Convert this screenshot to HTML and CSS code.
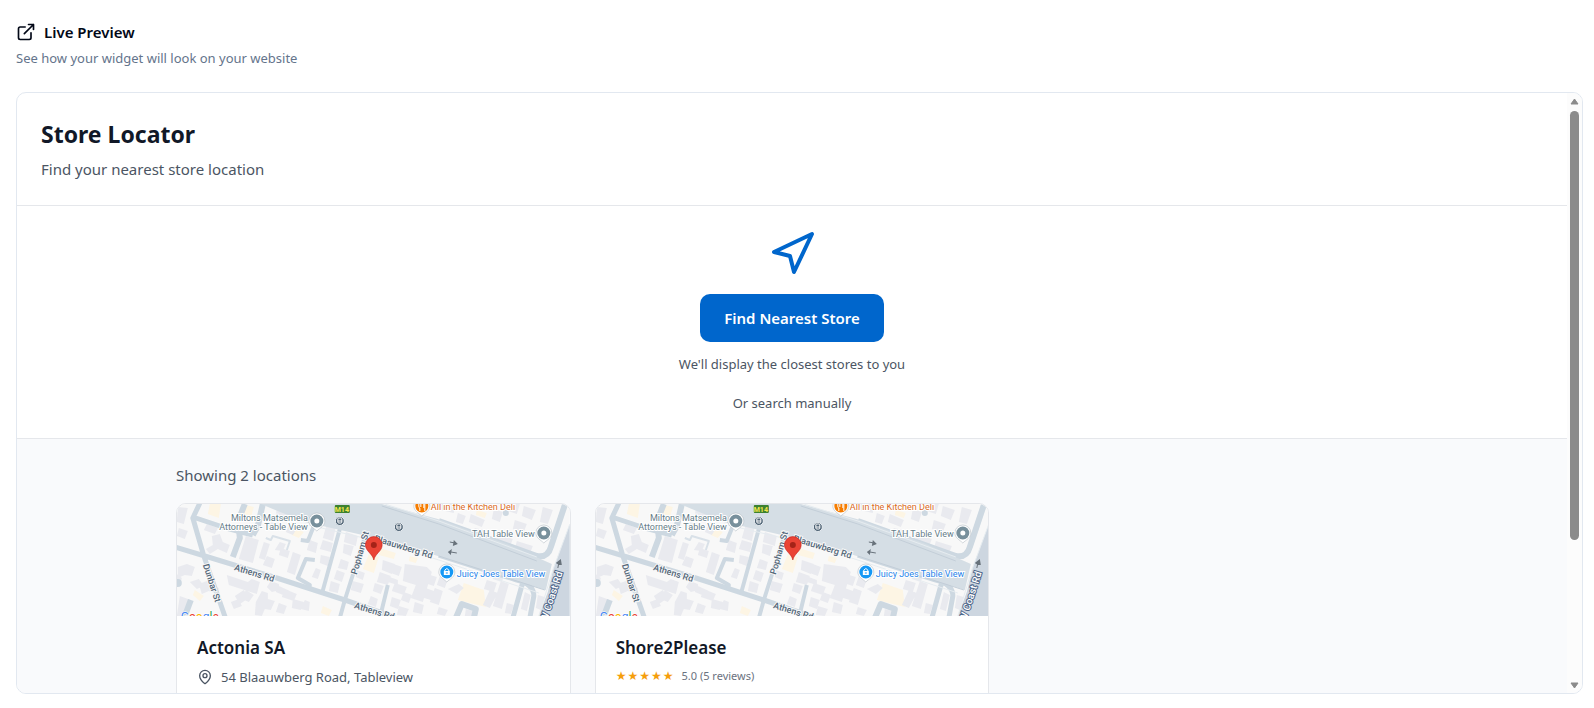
FILE: index.html
```
<!DOCTYPE html>
<html lang="en">
<head>
<meta charset="utf-8">
<title>Live Preview</title>
<link rel="stylesheet" href="styles.css">
</head>
<body>
<svg class="defs" aria-hidden="true">
  <symbol id="streets" viewBox="0 0 393 112">
    <rect width="393" height="112" fill="#f8f8f8"/>
    <g fill="#fdf5e4">
      <path d="M33 0l11 0-2 14-11-4zM65 0l12 3-4 14-10-3zM192 50l10 3-5 16-11-4zM203 44l16 5-2 6-15-4zM18 86l9 6-4 5-7-6zM146 102l9 4-3 6-8-3zM287 79l20 7 2 17-28-7zM300 6l10 3-2 5-9-3zM118 24l9 4-5 6-7-3zM233 52l8 2-2 5-7-2z"/>
    </g>
    <g fill="#e9eaef">
      <path d="M1 3l10 1-4 16-7-2zM2 24l9 3-3 8-8-3zM30 20l11 4-3 6-11-4zM35 32l8-2 3 8 7 3-3 8-9-4-8 5-4-5 7-4zM69 32l13 4-6 23-14-4zM87 38l6 2-5 16-6-2zM90 52l8 3-3 9-9-3zM104 44l9 3-2 7-9-3zM116 48l8 3-6 20-8-3zM98 46l5-8 6 2-3 7z"/>
      <path d="M1 63l9-3 8 3-3 9-7-1-7 3zM13 78l9-3 5 7-7 3zM22 80l8-3 4 5 8 2-1 6-9-3-7 3zM0 70l5 4-2 8-3-2zM50 71l21 7 4-3 8 3-3 12-28-9zM58 92l9-6 5 8-9 6zM54 98l8-3 3 7-8 3zM69 86l8 5-5 7-7-3zM79 98l6-11 6 2 0 6 7 2-4 9-6-1-3 7-7-1zM94 77l8 3 1 6-8 2-5-5zM100 81l13 6-2 6-12-5zM108 85l12 5-3 7-12-4zM116 95l11 3-3 8-9-2zM128 96l5 2-1 9-8-2zM3 92l11 4-4 16-10 0zM102 99l8 3-3 8-8-2z"/>
      <path d="M100 4l14 3-2 8-13-4zM92 18l10 2-3 6-9-3zM112 21l9 2-5 8-7-3zM150 20l9 3-3 14-10-3zM146 36l10 3-2 9-11-3zM144 51l9 2-2 9-8-3zM133 36l8 3-2 10-9-3zM139 64l5 2-3 9-6-2zM169 28l12 4-2 10-12-4zM167 40l10 2-3 10-8-3zM164 55l8 3-2 8-9-2zM160 66l8 3-3 9-8-3zM154 77l9 3-2 9-9-2zM176 77l11 3-3 9-10-3zM180 66l8 3-2 7-7-3z"/>
      <path d="M206 56l12 4-3 10-10-4zM203 68l11 4-3 9-11-3zM198 79l9 3-3 8-8-3zM217 60l8 3-3 9-8-3zM213 73l8 3 0 5-10-3zM218 79l12 4-3 8-12-4zM228 60l22 3 5 5-9 30-12-4 5-13-13-4zM215 93l9 3-3 9-8-3zM227 88l8 3-3 8-8-3zM222 102l10 3-3 7-9-1zM250 70l10 3-3 9-9-3zM246 83l11 4-3 9-10-3zM258 84l8 3-4 14-9-3zM262 103l9 3-3 6-8-2zM194 92l7 3-2 8-8-3zM238 98l9 3-2 9-9-2z"/>
      <path d="M263 72l8 3-3 9-8-3zM271 85l11-5 5 4-7 6zM310 76l10 3-3 9-10-3zM313 86l8 3-8 15-7-3zM324 77l8 3-7 25-9-3zM318 69l9 3-2 6-9-3zM348 88l6 3-4 16-6-2zM337 70l7 2-2 5-7-2zM330 99l7 2-3 9-6-1zM289 105l7 2-1 5-7 0zM361 91l7 2-4 13-5-2z"/>
      <path d="M262 0l16 0-1 9-13-3zM281 9l8 3-3 8-7-2zM294 10l14 6-3 7-13-5zM298 24l9 2-2 9-10-3zM317 5l9 3-3 10-8-3zM331 0l12 0-3 10-12-4zM347 2l12 4-4 10-10-4zM338 16l12 4-3 8-11-3zM321 30l15 5-3 8-14-4zM340 37l16 5-3 8-15-5zM366 3l10 3-5 14-8-2zM310 32l7 2-2 6-7-2z"/>
    </g>
    <g fill="none" stroke="#cdd8e1" stroke-linejoin="round">
      <path stroke-width="5" d="M24-3L16 14 27 52 49 115M16 13L49 24 76 31M-2 43L28 52 100 74 168 96 218 113"/>
      <path stroke-width="6" d="M62 24L63 34 56 53M76 31l5-9 5-22M64 10l4-10"/>
      <path stroke-width="4" d="M163 25L145 90M189 30L168 96 163 114M211 81L203 114M138 56l-9-1-8 19 12 7-1 5M124 36l7 1 6-15"/>
      <path stroke-width="5" d="M346 78L336 114M262 51L340 76Q357 80 357 92L353 114"/>
      <path stroke-width="6" d="M279 114l6-14 14 5-2 9M8 112l6-16"/>
      <path stroke-width="6" d="M389-2L374 43Q371 54 360 52L262 17"/>
      <path stroke="#d9e1e8" stroke-width="2" d="M89 34l5 2 2-4 17 5-3 9"/>
    </g>
    <path fill="#d5dee5" d="M84 0H205L261 15 330 40 375 60 369 86 261 52 208 36 128 18 96 5z"/>
    <path fill="#cdd6e0" d="M393 20L377 63 371 88 362 112H393z"/>
    <path fill="none" stroke="#e6ecf0" d="M208 0l54 17 98 36M128 20l80 19 54 17 100 33M393 20l-17 46-14 46"/>
    <path fill="none" stroke="#c3ced8" d="M205 2l57 18 98 37M262 52l106 34"/>
    <circle cx="1" cy="79" r="4" fill="#cdd8e1"/><circle cx="329" cy="9" r="3" fill="#cdd8e1"/>
    <path fill="none" stroke="#68727b" d="M273 38l5 1"/><path fill="#68727b" d="M277 36l4 4-5 2zM275 45l-4 3 3 3zM382 61l-3-2 5-4 1 6z"/><path stroke="#68727b" d="M274 48l6 1M381 64l1-5"/>
    <g fill="#fff" stroke="#a9b3ba" stroke-width=".5"><path id="drop" d="M140 27C137 24 132 22 132 17a8 8 0 0 1 16 0C148 22 143 24 140 27z"/><use href="#drop" x="105" y="-15"/><use href="#drop" x="227" y="12"/><use href="#drop" x="130" y="51"/></g>
    <circle cx="140" cy="17" r="6.500" fill="#78909c"/><circle cx="140" cy="17" r="2.500" fill="#fff"/>
    <circle cx="367" cy="29" r="6.500" fill="#78909c"/><circle cx="367" cy="29" r="2.500" fill="#fff"/>
    <circle cx="245" cy="2" r="6.500" fill="#f57c00"/><path stroke="#fff" fill="none" d="M242-1v3q0 2 1 2v3M244-1v4M248-1v8M247 0v4"/>
    <circle cx="270" cy="68" r="6.500" fill="#1598f5"/><path fill="#fff" d="M267 67h6v4h-6z"/><path fill="none" stroke="#fff" d="M268 67v-1q2-3 4 0v1"/><path stroke="#1598f5" d="M269 69h2"/>
    <g id="bus"><circle cx="163" cy="17" r="4.500" fill="#4d6274" stroke="#e9eef2"/><rect x="161" y="14" width="4" height="5" rx="1" fill="none" stroke="#fff"/><path stroke="#fff" d="M161 17h4"/></g>
    <use href="#bus" x="59" y="6"/>
    <rect x="158" y="1" width="15" height="8" rx="1" fill="#3c8130"/>
  </symbol>
  <symbol id="marker" viewBox="0 0 18 25">
    <path fill="#ea4335" stroke="#c5221f" stroke-width=".6" d="M9 24C8 18 .6 15 .6 9a8.400 8.400 0 0 1 16.800 0C17.400 15 10 18 9 24z"/><circle cx="9" cy="9" r="3" fill="#a52318"/>
  </symbol>
</svg>

<main class="page">
  <header class="intro">
    <h2 class="intro-title">
      <svg class="icon-link" viewBox="0 0 24 24" aria-hidden="true"><path d="M15 3h6v6M10 14 21 3M18 13v6a2 2 0 0 1-2 2H5a2 2 0 0 1-2-2V8a2 2 0 0 1 2-2h6"/></svg>
      Live Preview
    </h2>
    <p class="intro-text">See how your widget will look on your website</p>
  </header>

  <section class="frame">
    <div class="widget">
      <header class="widget-head">
        <h1 class="widget-title">Store Locator</h1>
        <p class="widget-text">Find your nearest store location</p>
      </header>
      <section class="finder">
        <svg class="icon-nav" viewBox="0 0 24 24" aria-hidden="true"><path d="M3 11 22 2l-9 19-2-8z"/></svg>
        <button class="find-button" type="button">Find Nearest Store</button>
        <p class="finder-note">We'll display the closest stores to you</p>
        <p class="finder-alt">Or search manually</p>
      </section>
      <section class="results">
        <div class="results-inner">
          <p class="count">Showing 2 locations</p>
          <div class="cards">
            <article class="card">
              <svg class="map" viewBox="0 0 393 112" preserveAspectRatio="xMidYMid slice">
                <use href="#streets" width="393" height="112"/>
                <g class="place end"><text x="131" y="17">Miltons Matsemela</text><text x="131" y="26">Attorneys - Table View</text><text x="358" y="33">TAH Table View</text></g>
                <text class="place food" x="254" y="6">All in the Kitchen Deli</text>
                <text class="place shop" x="280" y="73">Juicy Joes Table View</text>
                <text class="shield" x="165" y="8">M14</text>
                <g class="road"><text transform="translate(57 66) rotate(17)">Athens Rd</text><text transform="translate(177 104) rotate(17)">Athens Rd</text><text transform="translate(26 61) rotate(72)">Dunbar St</text><text transform="translate(180 71) rotate(-74)">Popham St</text><text transform="translate(197 37) rotate(17)">Blaauwberg Rd</text></g>
                <text class="road coast" transform="translate(370 118) rotate(-72)">W Coast Rd</text>
                <text class="brand" x="4" y="117"><tspan fill="#4285f4">G</tspan><tspan fill="#ea4335">o</tspan><tspan fill="#fbbc05">o</tspan><tspan fill="#4285f4">g</tspan><tspan fill="#34a853">l</tspan><tspan fill="#ea4335">e</tspan></text>
                <use href="#marker" x="188" y="32" width="18" height="25"/>
              </svg>
              <div class="card-body">
                <h3 class="card-title">Actonia SA</h3>
                <p class="address">
                  <svg class="icon-pin" viewBox="0 0 24 24" aria-hidden="true"><path d="M20 10c0 5-5.500 10.200-7.400 11.800a1 1 0 0 1-1.200 0C9.500 20.200 4 15 4 10a8 8 0 0 1 16 0"/><circle cx="12" cy="10" r="3"/></svg>
                  54 Blaauwberg Road, Tableview
                </p>
              </div>
            </article>
            <article class="card">
              <svg class="map" viewBox="0 0 393 112" preserveAspectRatio="xMidYMid slice">
                <use href="#streets" width="393" height="112"/>
                <g class="place end"><text x="131" y="17">Miltons Matsemela</text><text x="131" y="26">Attorneys - Table View</text><text x="358" y="33">TAH Table View</text></g>
                <text class="place food" x="254" y="6">All in the Kitchen Deli</text>
                <text class="place shop" x="280" y="73">Juicy Joes Table View</text>
                <text class="shield" x="165" y="8">M14</text>
                <g class="road"><text transform="translate(57 66) rotate(17)">Athens Rd</text><text transform="translate(177 104) rotate(17)">Athens Rd</text><text transform="translate(26 61) rotate(72)">Dunbar St</text><text transform="translate(180 71) rotate(-74)">Popham St</text><text transform="translate(197 37) rotate(17)">Blaauwberg Rd</text></g>
                <text class="road coast" transform="translate(370 118) rotate(-72)">W Coast Rd</text>
                <text class="brand" x="4" y="117"><tspan fill="#4285f4">G</tspan><tspan fill="#ea4335">o</tspan><tspan fill="#fbbc05">o</tspan><tspan fill="#4285f4">g</tspan><tspan fill="#34a853">l</tspan><tspan fill="#ea4335">e</tspan></text>
                <use href="#marker" x="188" y="32" width="18" height="25"/>
              </svg>
              <div class="card-body">
                <h3 class="card-title">Shore2Please</h3>
                <p class="rating"><span class="stars"><span>★</span><span>★</span><span>★</span><span>★</span><span>★</span></span>5.0 (5 reviews)</p>
              </div>
            </article>
          </div>
        </div>
      </section>
    </div>
    <div class="scrollbar" aria-hidden="true">
      <svg class="arrow" viewBox="0 0 9 7"><path d="M4.500 1 8 6H1z"/></svg>
      <div class="track"><div class="thumb"></div></div>
      <svg class="arrow" viewBox="0 0 9 7"><path d="M4.500 6 1 1h7z"/></svg>
    </div>
  </section>
</main>
</body>
</html>
```
FILE: styles.css
```
* { box-sizing: border-box; margin: 0; }
body { background: #fff; color: #020817; font: 13px/20px "Noto Sans", "Open Sans", sans-serif; }
.defs { display: block; width: 0; height: 0; }
.page { padding: 20px 11px 14px 16px; }
.intro { padding-bottom: 24px; }
.intro-title { display: flex; align-items: center; gap: 8px; font-size: 15px; line-height: 24px; font-weight: 600; }
.icon-link, .icon-nav, .icon-pin { fill: none; stroke: currentColor; stroke-width: 2; stroke-linecap: round; stroke-linejoin: round; flex: none; }
.icon-link { width: 20px; height: 20px; }
.intro-text { margin-top: 4px; color: #64748b; }

.frame { display: flex; height: 602px; border: 1px solid #e2e8f0; border-radius: 10px; overflow: hidden; }
.widget { flex: 1; min-width: 0; overflow: hidden; }
.widget-head { padding: 24px; border-bottom: 1px solid #e5e7eb; }
.widget-title { color: #111827; font-size: 23px; line-height: 34px; font-weight: 700; }
.widget-text { margin-top: 6px; color: #4b5563; font-size: 15px; line-height: 24px; }

.finder { display: flex; flex-direction: column; align-items: center; padding: 24px 24px 25px; border-bottom: 1px solid #e5e7eb; color: #4b5563; }
.icon-nav { width: 48px; height: 48px; color: #0066cc; }
.find-button { margin-top: 16px; padding: 12px 24px; border: 0; border-radius: 10px; background: #0066cc; color: #fff; font: 600 15px/24px "Noto Sans", "Open Sans", sans-serif; }
.finder-note { margin-top: 12px; }
.finder-alt { margin-top: 19px; }

.results { min-height: 100%; padding: 24px; background: #f9fafc; }
.results-inner { max-width: 1232px; margin: 0 auto; }
.count { color: #4b5563; font-size: 15px; line-height: 24px; }
.cards { display: grid; grid-template-columns: repeat(3, 1fr); gap: 24px; margin-top: 16px; }
.card { min-height: 300px; border: 1px solid #e5e7eb; border-radius: 10px; overflow: hidden; background: #fff; }
.map { display: block; width: 100%; height: 112px; }
.card-body { padding: 20px; }
.card-title { color: #111827; font-size: 17px; line-height: 24px; font-weight: 600; }
.address { display: flex; align-items: center; gap: 8px; margin-top: 7px; color: #4b5563; }
.icon-pin { width: 16px; height: 16px; }
.rating { display: flex; align-items: center; gap: 8px; margin-top: 8px; color: #6b7280; font-size: 11px; line-height: 16px; }
.stars { display: flex; gap: 1px; color: #f59e0b; font: 12px/16px "DejaVu Sans", sans-serif; }

.place { fill: #667d89; stroke: #fff; stroke-width: 2px; paint-order: stroke; font: 9px Roboto, sans-serif; }
.end { text-anchor: end; }
.food { fill: #d9691d; }
.shop { fill: #2583ea; }
.road { fill: #536779; stroke: #f8f8f8; stroke-width: 2px; paint-order: stroke; font: 500 9px Roboto, sans-serif; }
.coast { fill: #fff; stroke: #50678a; font-size: 10px; }
.shield { fill: #f3e64d; text-anchor: middle; font: 700 7px Roboto, sans-serif; }
.brand { stroke: #fff; stroke-width: 1px; paint-order: stroke; font: 12px Roboto, sans-serif; }

.scrollbar { display: flex; flex-direction: column; align-items: center; width: 15px; padding: 5px 0 4px; background: #fcfcfc; }
.arrow { width: 9px; height: 7px; fill: #8b8b8b; stroke: #8b8b8b; stroke-linejoin: round; }
.track { flex: 1; width: 9px; padding: 6px 0; }
.thumb { height: 76%; border-radius: 5px; background: #8b8b8b; }
```
